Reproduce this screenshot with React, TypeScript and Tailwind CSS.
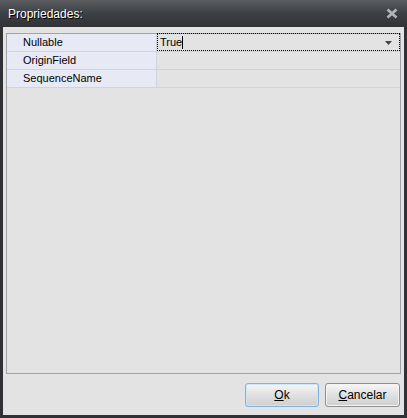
import React from "react";

interface PropRow {
  name: string;
  value: string;
  editing?: boolean;
}

const rows: PropRow[] = [
  { name: "Nullable", value: "True", editing: true },
  { name: "OriginField", value: "" },
  { name: "SequenceName", value: "" },
];

export default function App() {
  return (
    <div
      className="w-[407px] h-[418px] bg-[#2f3134] flex flex-col text-[11px] text-black"
      style={{ fontFamily: '"Liberation Sans", Arial, sans-serif' }}
    >
      {/* title bar */}
      <div className="h-[27px] shrink-0 flex items-center justify-between pl-[8px] pr-[9px] bg-gradient-to-b from-[#5a5c60] via-[#3d4044] to-[#303236]">
        <span className="text-white text-[12px] [text-shadow:1px_1px_0_#000]">Propriedades:</span>
        <svg width="12" height="11" viewBox="0 0 12 11">
          <path d="M1.5 1.5 L10.5 9.5 M10.5 1.5 L1.5 9.5" stroke="#b3b5b8" strokeWidth="2.6" />
        </svg>
      </div>

      {/* body */}
      <div className="flex-1 mx-[3px] mb-[3px] bg-[#e3e3e3] flex flex-col pt-[6px] px-[3px]">
        <div className="h-[341px] border border-[#a3a3a3] flex flex-col">
          {rows.map((row) => (
            <div key={row.name} className="h-[18px] flex border-b border-[#cdd3e3]">
              <div className="w-[150px] bg-[#e7eaf5] border-r border-[#cdd3e3] pl-[16px] flex items-center">
                {row.name}
              </div>
              <div className="flex-1 relative flex items-center pl-[3px]">
                {row.editing && (
                  <>
                    <div className="absolute inset-0 -top-[1px] border border-dotted border-black" />
                    <span>{row.value}</span>
                    <span className="w-px h-[13px] bg-black" />
                    <svg className="absolute right-[8px] top-[7px]" width="7" height="4" viewBox="0 0 7 4">
                      <path d="M0 0 H7 L3.5 4 Z" fill="#444" />
                    </svg>
                  </>
                )}
              </div>
            </div>
          ))}
        </div>

        <div className="flex justify-end gap-[6px] mt-[9px] pr-[1px]">
          <button className="w-[74px] h-[24px] rounded-[3px] border border-[#7fb2de] shadow-[inset_0_0_0_1px_#cfe6f7] bg-gradient-to-b from-[#f7f7f7] via-[#e0e0e0] to-[#cfcfcf] text-[12px]">
            <span className="underline">O</span>k
          </button>
          <button className="w-[75px] h-[24px] rounded-[3px] border border-[#8e8e8e] shadow-[inset_0_0_0_1px_#f4f4f4] bg-gradient-to-b from-[#f7f7f7] via-[#e0e0e0] to-[#cfcfcf] text-[12px]">
            <span className="underline">C</span>ancelar
          </button>
        </div>
      </div>
    </div>
  );
}
